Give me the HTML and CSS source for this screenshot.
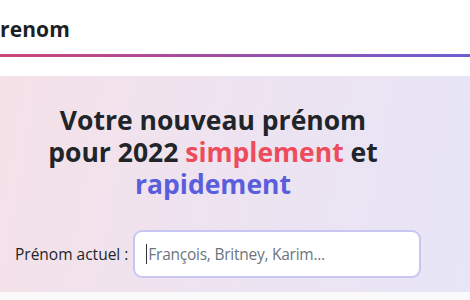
FILE: index.html
```html
<!DOCTYPE html>
<html lang="fr">
<head>
<meta charset="utf-8">
<title>Prénom</title>
<link rel="stylesheet" href="styles.css">
</head>
<body>
<header class="site-header">
  <div class="brand">renom</div>
</header>
<div class="header-line"></div>
<main class="hero">
  <div class="hero-inner">
    <h1 class="hero-title">Votre nouveau prénom<br>pour 2022 <span class="accent-red">simplement</span> et<br><span class="accent-blue">rapidement</span></h1>
    <form class="name-form">
      <label class="name-label" for="prenom">Prénom actuel :</label>
      <div class="name-input"><span class="caret"></span><span class="placeholder">François, Britney, Karim...</span></div>
    </form>
  </div>
</main>
<div class="footer-space"></div>
</body>
</html>
```
FILE: styles.css
```css
html, body {
  margin: 0;
  padding: 0;
}
body {
  background: #ffffff;
  font-family: "Open Sans", "Noto Sans", sans-serif;
  color: #212529;
  overflow: hidden;
}
.site-header {
  height: 54px;
  display: flex;
  align-items: center;
  padding-left: 0;
}
.brand {
  font-family: "Open Sans", sans-serif;
  font-weight: 700;
  font-size: 21px;
  color: #1d1f24;
  margin-top: 3px;
  letter-spacing: 0.1px;
}
.header-line {
  height: 3px;
  background: linear-gradient(90deg, #cc4577 0%, #9d4fa6 50%, #6b5fd4 100%);
}
.hero {
  margin-top: 19px;
  height: 216px;
  background: linear-gradient(100deg, #f5e1e8 0%, #eee3f0 45%, #e7e5f7 100%);
}
.hero-inner {
  width: 426px;
  padding-top: 28px;
}
.hero-title {
  margin: 0;
  text-align: center;
  font-size: 26.5px;
  line-height: 32px;
  font-weight: 700;
  color: #212529;
}
.accent-red {
  color: #ee4c5b;
}
.accent-blue {
  color: #5a5edc;
}
.name-form {
  display: flex;
  align-items: center;
  gap: 5px;
  margin-top: 30px;
  padding-left: 15px;
}
.name-label {
  font-size: 15.5px;
  color: #212529;
}
.name-input {
  box-sizing: border-box;
  width: 288px;
  height: 48px;
  background: #ffffff;
  border: 2px solid #c9c6f3;
  border-radius: 9px;
  display: flex;
  align-items: center;
  padding-left: 11px;
}
.caret {
  width: 1px;
  height: 20px;
  background: #333;
}
.placeholder {
  font-size: 15.5px;
  letter-spacing: -0.25px;
  color: #6c757d;
  margin-left: 1px;
}
.footer-space {
  height: 8px;
  background: #fafafa;
}
```
